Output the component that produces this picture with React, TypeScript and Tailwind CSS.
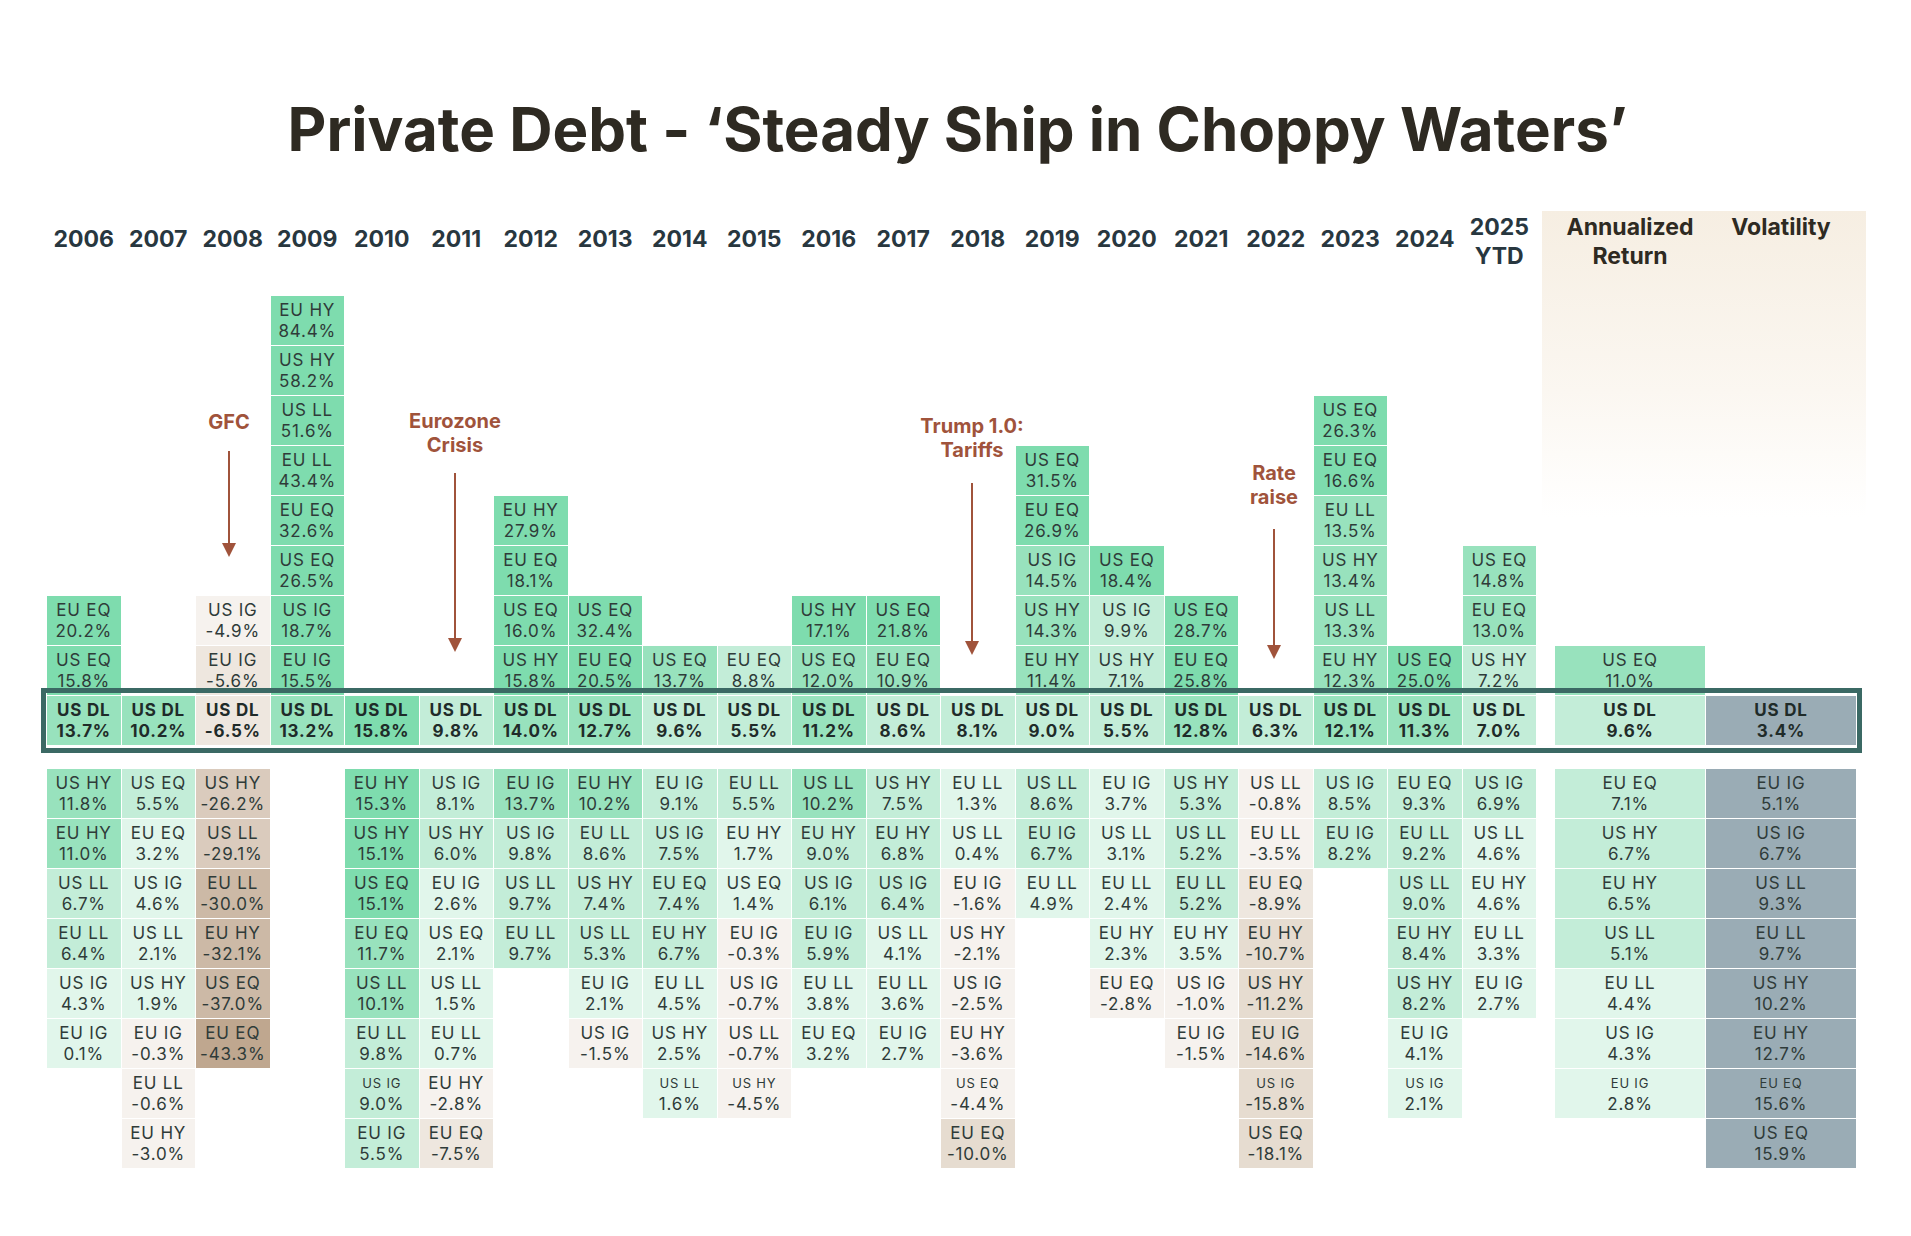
import type { ReactNode } from "react";

type Col = { head: string[]; above: string[]; dl: string; below: string[] };

// "*" before a label = the smaller label variant used in a few cells
const YEARS: Col[] = [
  { head: ["2006"], above: ["EU EQ|20.2", "US EQ|15.8"], dl: "13.7", below: ["US HY|11.8", "EU HY|11.0", "US LL|6.7", "EU LL|6.4", "US IG|4.3", "EU IG|0.1"] },
  { head: ["2007"], above: [], dl: "10.2", below: ["US EQ|5.5", "EU EQ|3.2", "US IG|4.6", "US LL|2.1", "US HY|1.9", "EU IG|-0.3", "EU LL|-0.6", "EU HY|-3.0"] },
  { head: ["2008"], above: ["US IG|-4.9", "EU IG|-5.6"], dl: "-6.5", below: ["US HY|-26.2", "US LL|-29.1", "EU LL|-30.0", "EU HY|-32.1", "US EQ|-37.0", "EU EQ|-43.3"] },
  { head: ["2009"], above: ["EU HY|84.4", "US HY|58.2", "US LL|51.6", "EU LL|43.4", "EU EQ|32.6", "US EQ|26.5", "US IG|18.7", "EU IG|15.5"], dl: "13.2", below: [] },
  { head: ["2010"], above: [], dl: "15.8", below: ["EU HY|15.3", "US HY|15.1", "US EQ|15.1", "EU EQ|11.7", "US LL|10.1", "EU LL|9.8", "*US IG|9.0", "EU IG|5.5"] },
  { head: ["2011"], above: [], dl: "9.8", below: ["US IG|8.1", "US HY|6.0", "EU IG|2.6", "US EQ|2.1", "US LL|1.5", "EU LL|0.7", "EU HY|-2.8", "EU EQ|-7.5"] },
  { head: ["2012"], above: ["EU HY|27.9", "EU EQ|18.1", "US EQ|16.0", "US HY|15.8"], dl: "14.0", below: ["EU IG|13.7", "US IG|9.8", "US LL|9.7", "EU LL|9.7"] },
  { head: ["2013"], above: ["US EQ|32.4", "EU EQ|20.5"], dl: "12.7", below: ["EU HY|10.2", "EU LL|8.6", "US HY|7.4", "US LL|5.3", "EU IG|2.1", "US IG|-1.5"] },
  { head: ["2014"], above: ["US EQ|13.7"], dl: "9.6", below: ["EU IG|9.1", "US IG|7.5", "EU EQ|7.4", "EU HY|6.7", "EU LL|4.5", "US HY|2.5", "*US LL|1.6"] },
  { head: ["2015"], above: ["EU EQ|8.8"], dl: "5.5", below: ["EU LL|5.5", "EU HY|1.7", "US EQ|1.4", "EU IG|-0.3", "US IG|-0.7", "US LL|-0.7", "*US HY|-4.5"] },
  { head: ["2016"], above: ["US HY|17.1", "US EQ|12.0"], dl: "11.2", below: ["US LL|10.2", "EU HY|9.0", "US IG|6.1", "EU IG|5.9", "EU LL|3.8", "EU EQ|3.2"] },
  { head: ["2017"], above: ["US EQ|21.8", "EU EQ|10.9"], dl: "8.6", below: ["US HY|7.5", "EU HY|6.8", "US IG|6.4", "US LL|4.1", "EU LL|3.6", "EU IG|2.7"] },
  { head: ["2018"], above: [], dl: "8.1", below: ["EU LL|1.3", "US LL|0.4", "EU IG|-1.6", "US HY|-2.1", "US IG|-2.5", "EU HY|-3.6", "*US EQ|-4.4", "EU EQ|-10.0"] },
  { head: ["2019"], above: ["US EQ|31.5", "EU EQ|26.9", "US IG|14.5", "US HY|14.3", "EU HY|11.4"], dl: "9.0", below: ["US LL|8.6", "EU IG|6.7", "EU LL|4.9"] },
  { head: ["2020"], above: ["US EQ|18.4", "US IG|9.9", "US HY|7.1"], dl: "5.5", below: ["EU IG|3.7", "US LL|3.1", "EU LL|2.4", "EU HY|2.3", "EU EQ|-2.8"] },
  { head: ["2021"], above: ["US EQ|28.7", "EU EQ|25.8"], dl: "12.8", below: ["US HY|5.3", "US LL|5.2", "EU LL|5.2", "EU HY|3.5", "US IG|-1.0", "EU IG|-1.5"] },
  { head: ["2022"], above: [], dl: "6.3", below: ["US LL|-0.8", "EU LL|-3.5", "EU EQ|-8.9", "EU HY|-10.7", "US HY|-11.2", "EU IG|-14.6", "*US IG|-15.8", "US EQ|-18.1"] },
  { head: ["2023"], above: ["US EQ|26.3", "EU EQ|16.6", "EU LL|13.5", "US HY|13.4", "US LL|13.3", "EU HY|12.3"], dl: "12.1", below: ["US IG|8.5", "EU IG|8.2"] },
  { head: ["2024"], above: ["US EQ|25.0"], dl: "11.3", below: ["EU EQ|9.3", "EU LL|9.2", "US LL|9.0", "EU HY|8.4", "US HY|8.2", "EU IG|4.1", "*US IG|2.1"] },
  { head: ["2025", "YTD"], above: ["US EQ|14.8", "EU EQ|13.0", "US HY|7.2"], dl: "7.0", below: ["US IG|6.9", "US LL|4.6", "EU HY|4.6", "EU LL|3.3", "EU IG|2.7"] },
];

const ANNUAL: Col = {
  head: ["Annualized", "Return"],
  above: ["US EQ|11.0"],
  dl: "9.6",
  below: ["EU EQ|7.1", "US HY|6.7", "EU HY|6.5", "US LL|5.1", "EU LL|4.4", "US IG|4.3", "*EU IG|2.8"],
};

const VOL: Col = {
  head: ["Volatility", "\u00a0"],
  above: [],
  dl: "3.4",
  below: ["EU IG|5.1", "US IG|6.7", "US LL|9.3", "EU LL|9.7", "US HY|10.2", "EU HY|12.7", "*EU EQ|15.6", "US EQ|15.9"],
};

function tone(v: number) {
  if (v >= 15) return "bg-[#7edcae]";
  if (v >= 10) return "bg-[#98e2bd]";
  if (v >= 5) return "bg-[#c3edd8]";
  if (v >= 0) return "bg-[#e1f6eb]";
  if (v > -5) return "bg-[#f6f2ee]";
  if (v > -9.5) return "bg-[#eee7df]";
  if (v > -25) return "bg-[#e6dcd0]";
  if (v > -29.5) return "bg-[#dacbbd]";
  if (v > -40) return "bg-[#ccb9a6]";
  return "bg-[#bfa78f]";
}

function Cell({ spec, bold, slate }: { spec: string; bold?: boolean; slate?: boolean }) {
  const small = spec.startsWith("*");
  const [label, value] = spec.replace("*", "").split("|");
  const bg = slate ? "bg-[#9aacb5]" : tone(parseFloat(value));
  return (
    <div
      className={`flex h-[49px] w-full flex-col items-center justify-center text-center leading-[21px] tracking-[0.05em] ${bg} ${
        bold ? "font-bold text-[#1f2b29]" : "text-[#2f3b39]"
      }`}
    >
      <span className={small ? "text-[13px]" : "text-[17px]"}>{label}</span>
      <span className="text-[17px]">{value}%</span>
    </div>
  );
}

function Column({ col, wide, slate, headTone }: { col: Col; wide?: boolean; slate?: boolean; headTone: string }) {
  const single = col.head.length === 1;
  return (
    <div className={`flex flex-col ${wide ? "w-[150px]" : "w-[73.5px]"}`}>
      <div
        className={`flex h-[62px] flex-col items-center justify-center text-[23px] font-bold leading-[29px] ${headTone} ${
          single ? "pb-[5px]" : ""
        }`}
      >
        {col.head.map((h) => (
          <span key={h}>{h}</span>
        ))}
      </div>
      <div className="mt-[23px] flex h-[399px] flex-col justify-end gap-px">
        {col.above.map((s) => (
          <Cell key={s} spec={s} slate={slate} />
        ))}
      </div>
      <div className="mt-px">
        <Cell spec={`US DL|${col.dl}`} bold slate={slate} />
      </div>
      <div className="mt-[24px] flex flex-col gap-px">
        {col.below.map((s) => (
          <Cell key={s} spec={s} slate={slate} />
        ))}
      </div>
    </div>
  );
}

function Arrow({ height }: { height: number }) {
  return (
    <svg width="16" height={height} viewBox={`0 0 16 ${height}`}>
      <line x1="8" y1="0" x2="8" y2={height - 12} stroke="#a0533b" strokeWidth="2" />
      <polygon points={`1,${height - 14} 15,${height - 14} 8,${height}`} fill="#a0533b" />
    </svg>
  );
}

function Note({ x, top, arrowTop, arrowBottom, children }: { x: number; top: number; arrowTop: number; arrowBottom: number; children: ReactNode }) {
  return (
    <>
      <div
        className="absolute -translate-x-1/2 whitespace-nowrap text-center text-[20px] font-bold leading-[24px] text-[#a0533b]"
        style={{ left: x, top }}
      >
        {children}
      </div>
      <div className="absolute -translate-x-1/2" style={{ left: x, top: arrowTop }}>
        <Arrow height={arrowBottom - arrowTop} />
      </div>
    </>
  );
}

export default function App() {
  return (
    <div className="h-[1236px] w-[1911px] overflow-hidden bg-white pt-[99px] font-['Inter',sans-serif]">
      <h1 className="pl-[4px] text-center text-[60px] font-bold leading-[60px] text-[#2e2a22]">
        Private Debt - ‘Steady Ship in Choppy Waters’
      </h1>

      <div className="relative ml-[47px] mt-[52px] flex items-start">
        {YEARS.map((c) => (
          <div key={c.head.join()} className="mr-px">
            <Column col={c} headTone="text-[#28373f]" />
          </div>
        ))}

        <div className="ml-[5px] flex gap-px bg-[linear-gradient(to_bottom,#f6eee2_0px,#fbf7f1_180px,#ffffff_306px)] pl-[13px] pr-[10px]">
          <Column col={ANNUAL} wide headTone="text-[#2e2a22]" />
          <Column col={VOL} wide slate headTone="text-[#2e2a22]" />
        </div>

        {/* US DL highlight frame */}
        <div className="pointer-events-none absolute left-[-6px] top-[477px] z-10 h-[65px] w-[1821px] border-[5px] border-[#3b6964]" />

        <Note x={182} top={199} arrowTop={240} arrowBottom={346}>
          GFC
        </Note>
        <Note x={408} top={198} arrowTop={262} arrowBottom={441}>
          Eurozone
          <br />
          Crisis
        </Note>
        <Note x={925} top={203} arrowTop={272} arrowBottom={444}>
          Trump 1.0:
          <br />
          Tariffs
        </Note>
        <Note x={1227} top={250} arrowTop={318} arrowBottom={448}>
          Rate
          <br />
          raise
        </Note>
      </div>
    </div>
  );
}
